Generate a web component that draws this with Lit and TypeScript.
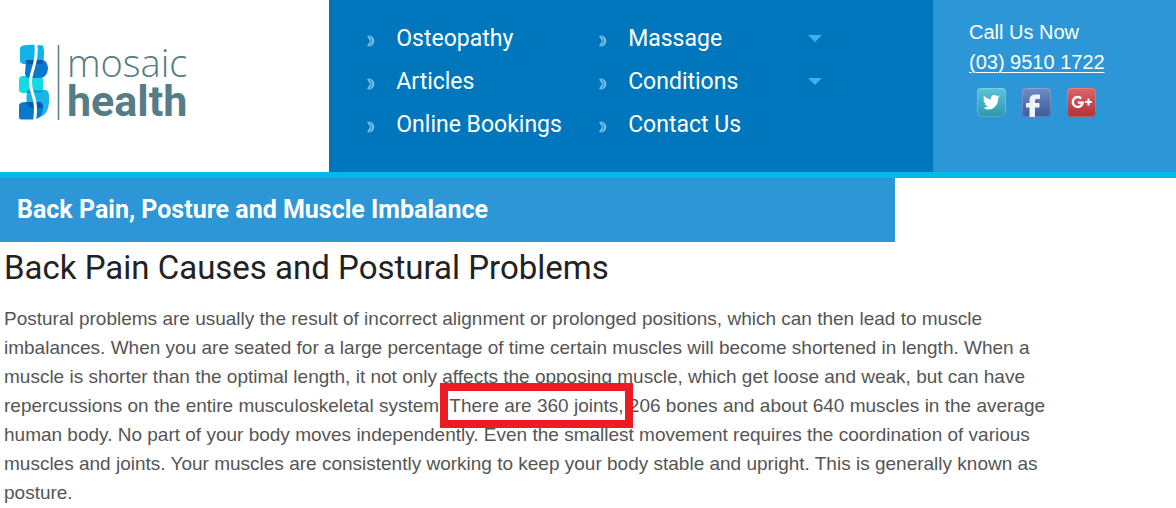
import { LitElement, html, css, svg } from "lit";
import { customElement } from "lit/decorators.js";

interface NavItem {
  label: string;
  submenu?: boolean;
}

const NAV: NavItem[] = [
  { label: "Osteopathy" },
  { label: "Massage", submenu: true },
  { label: "Articles" },
  { label: "Conditions", submenu: true },
  { label: "Online Bookings" },
  { label: "Contact Us" },
];

const SOCIAL = [
  {
    name: "Twitter",
    top: "#5cc4dc",
    bottom: "#2f96ac",
    glyph: svg`<path fill="#fff" d="M6 19.6c2 .2 3.700-.3 5-1.400-1.700-.1-2.800-1-3.300-2.500h1.500C7.400 15.100 6.500 13.700 6.500 12l1.500.4C6.500 11.100 6.200 9.400 7 7.800c1.900 2.200 4.200 3.400 7 3.600-.5-2.400 1-4.400 3.300-4.400 1.100 0 1.900.4 2.600 1.100l2.300-.9-1.400 1.900 2-.5-1.700 1.900c.2 6.300-4.100 11-9.700 11-2 0-3.900-.6-5.400-1.900z"/>`,
  },
  {
    name: "Facebook",
    top: "#6f8cc4",
    bottom: "#3d5b9c",
    glyph: svg`<path fill="#eef2fa" d="M7.500 29V19.500H4V15h3.500v-2.500C7.500 8 10 6.500 14 6.500h4V11h-3c-1.500 0-2 .6-2 1.800V15h4.500v4.500H13V29z"/>`,
  },
  {
    name: "Google Plus",
    top: "#dc6468",
    bottom: "#b03238",
    glyph: svg`<path fill="none" stroke="#fff" stroke-width="2.400" d="M14.300 10.500A5 5 0 1 0 15.700 14.600H10.800"/><path stroke="#fff" stroke-width="2" d="M18 14h7M21.500 10.500v7"/>`,
  },
];

@customElement("app-root")
export class AppRoot extends LitElement {
  static styles = css`
    :host {
      display: block;
      background: #fff;
      color: #555;
      font-family: "Liberation Sans", Arial, sans-serif;
      font-size: 20px;
      line-height: 29px;
    }
    a {
      color: inherit;
      text-decoration: none;
    }
    .header {
      display: grid;
      grid-template-columns: 28% 1fr 243px;
      border-bottom: 6px solid #00b9e8;
    }
    .brand {
      padding: 40px 16px 0;
    }
    .logo {
      display: block;
      width: 184px;
      height: 92px;
      overflow: visible;
    }
    .logo-text {
      fill: #567c86;
    }
    .thin {
      font-family: "Open Sans", sans-serif;
      font-size: 38px;
      font-weight: 300;
    }
    .heavy {
      font-family: Roboto, sans-serif;
      font-size: 43px;
      font-weight: 700;
    }
    .nav {
      background: #0077bc;
      padding: 17px 102px 26px 38px;
    }
    .menu {
      display: grid;
      grid-template-columns: 1fr 1fr;
      margin: 0;
      padding: 0;
      list-style: none;
    }
    .item {
      display: flex;
      align-items: center;
      height: 43px;
      color: #fff;
      font-family: Roboto, sans-serif;
      font-size: 23px;
      white-space: nowrap;
    }
    .link {
      display: flex;
      flex: 1;
      align-items: center;
      gap: 21px;
    }
    .bullet {
      flex: none;
      width: 8px;
      height: 12px;
      margin-top: 4px;
    }
    .caret {
      flex: none;
      width: 14px;
      height: 7px;
      margin-right: 9px;
    }
    .contact {
      background: #2d96d7;
      color: #fff;
      padding: 17px 36px 0;
      line-height: 30px;
    }
    .contact p {
      margin: 0;
    }
    .phone {
      text-decoration: underline;
      text-underline-offset: 3px;
      text-decoration-thickness: 1px;
    }
    .social {
      display: flex;
      gap: 16px;
      padding: 11px 8px 0;
    }
    .social a,
    .social svg {
      display: block;
      width: 29px;
      height: 29px;
    }
    .banner {
      box-sizing: border-box;
      width: 76.1%;
      margin: 0;
      padding: 16px 17px;
      background: #2d96d7;
      color: #fff;
      font-family: Roboto, sans-serif;
      font-size: 25px;
      font-weight: 700;
      line-height: 32px;
    }
    .content {
      padding: 0 110px 0 4px;
    }
    .title {
      margin: 0;
      padding: 4px 0 15px;
      color: #222;
      font-family: Roboto, sans-serif;
      font-size: 33px;
      font-weight: 400;
      line-height: 43px;
    }
    .copy {
      margin: 0;
      font-size: 19px;
    }
    .marked {
      position: relative;
      white-space: nowrap;
    }
    .marked::after {
      content: "";
      position: absolute;
      inset: -12px -9px;
      border: 8px solid #ec1c24;
    }
  `;

  private renderLogo() {
    return html`<svg class="logo" viewBox="0 0 184 92" role="img" aria-label="Mosaic Health">
      <path d="M7 5.500Q16 4 27 5.500Q29 12 27 24H8Q4 24 4 20V9Q4 6 7 5.500z" fill="#12b4e8" />
      <rect x="3" y="36" width="24" height="17" rx="4" fill="#12dbe2" />
      <path d="M10 20H27Q32 22 32 29Q31 38 23 38H14Q9 38 9 33z" fill="#0a78cc" />
      <path d="M10 20H27V24H13Q10 23 10 20z" fill="#0656b0" />
      <path d="M11 50H30Q33 51 33 56Q34 74 24 77H14Q9 66 11 50z" fill="#19b5ea" />
      <path d="M11 50H27Q27 53 24 53H11z" fill="#08a0d8" />
      <path d="M3 65Q4 62 9 62H23Q27 62 27 67Q27 79 17 79.500H5Q3 79.500 3 77z" fill="#0a78cc" />
      <path d="M11 62H23Q27 62 27 68H17Q12 67 11 62z" fill="#0656b0" />
      <path d="M20 4C22 26 14 30 14.500 43C15 56 22 58 18.500 81" fill="none" stroke="#fff" stroke-width="3" />
      <path d="M42.500 5v75" stroke="#567c86" stroke-width="1.500" />
      <text class="logo-text thin" x="51" y="37">mosaic</text>
      <text class="logo-text heavy" x="51" y="76">health</text>
    </svg>`;
  }

  private renderItem(item: NavItem) {
    return html`<li class="item">
      <a class="link" href="#">
        <svg class="bullet" viewBox="0 0 8 12" aria-hidden="true">
          <path d="M0 1L2 .5Q7 1 7.300 6Q7 11 2 11.500L0 11L3 6z" fill="#8ccbf0" fill-opacity=".85" />
          <path d="M2.500 1.500Q5 3 4.300 6Q5 9 2.500 10.500" fill="none" stroke="#0077bc" stroke-width=".8" />
        </svg>
        ${item.label}
      </a>
      ${item.submenu
        ? html`<svg class="caret" viewBox="0 0 14 7" aria-hidden="true"><path d="M0 0h14L7 7z" fill="#44b0e4" /></svg>`
        : ""}
    </li>`;
  }

  private renderSocial(entry: (typeof SOCIAL)[number], index: number) {
    return html`<a href="#" aria-label=${entry.name}>
      <svg viewBox="0 0 29 29" aria-hidden="true">
        <defs>
          <linearGradient id="tile${index}" x1="0" y1="0" x2="0" y2="1">
            <stop offset="0" stop-color=${entry.top} />
            <stop offset="1" stop-color=${entry.bottom} />
          </linearGradient>
        </defs>
        <rect width="29" height="29" rx="4" fill="url(#tile${index})" />
        <rect x=".5" y=".5" width="28" height="28" rx="4" fill="none" stroke="#fff" stroke-opacity=".2" />
        ${entry.glyph}
      </svg>
    </a>`;
  }

  render() {
    return html`
      <header class="header">
        <a class="brand" href="#">${this.renderLogo()}</a>
        <nav class="nav" aria-label="Main">
          <ul class="menu">
            ${NAV.map((item) => this.renderItem(item))}
          </ul>
        </nav>
        <div class="contact">
          <p>Call Us Now</p>
          <p><a class="phone" href="tel:0395101722">(03) 9510 1722</a></p>
          <div class="social">${SOCIAL.map((entry, i) => this.renderSocial(entry, i))}</div>
        </div>
      </header>
      <main>
        <h1 class="banner">Back Pain, Posture and Muscle Imbalance</h1>
        <section class="content">
          <h2 class="title">Back Pain Causes and Postural Problems</h2>
          <p class="copy">
            Postural problems are usually the result of incorrect alignment or prolonged positions, which can then lead
            to muscle imbalances. When you are seated for a large percentage of time certain muscles will become
            shortened in length. When a muscle is shorter than the optimal length, it not only affects the opposing
            muscle, which get loose and weak, but can have repercussions on the entire musculoskeletal system.
            <span class="marked">There are 360 joints,</span> 206 bones and about 640 muscles in the average human body.
            No part of your body moves independently. Even the smallest movement requires the coordination of various
            muscles and joints. Your muscles are consistently working to keep your body stable and upright. This is
            generally known as posture.
          </p>
        </section>
      </main>
    `;
  }
}
